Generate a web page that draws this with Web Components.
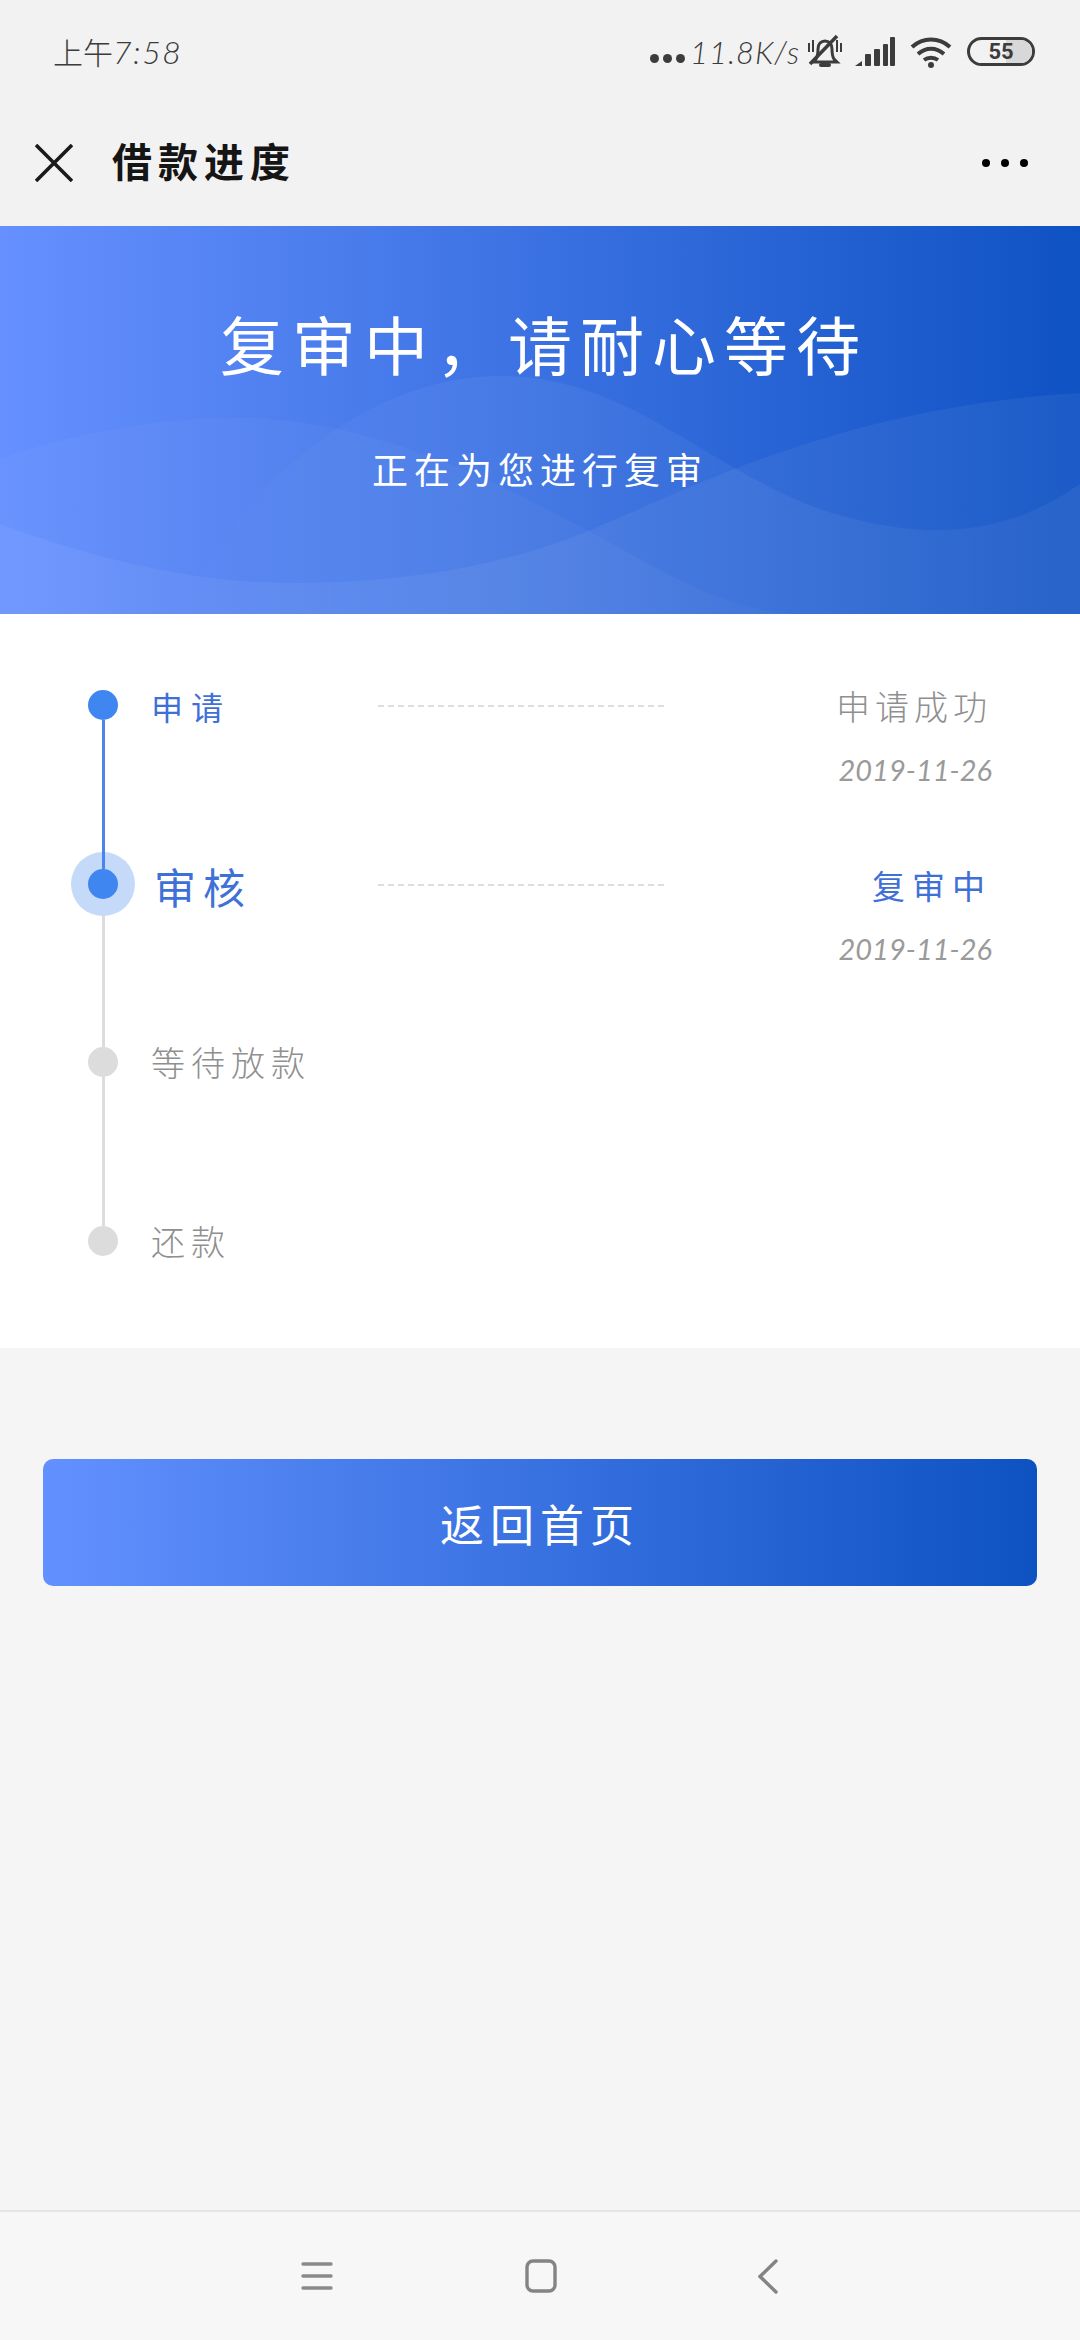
<!DOCTYPE html>
<html lang="zh-CN">
<head>
<meta charset="utf-8">
<title>借款进度</title>
<style>
  html, body { margin: 0; padding: 0; background: #f5f5f5; }
  body { width: 1080px; height: 2340px; font-family: "Noto Sans CJK SC", "Noto Sans", sans-serif; }
  #app { display: flex; flex-direction: column; height: 2340px; }
</style>
</head>
<body>
<div id="app">
  <status-bar></status-bar>
  <nav-bar title="借款进度"></nav-bar>
  <hero-banner heading="复审中，请耐心等待" sub="正在为您进行复审"></hero-banner>
  <progress-list>
    <progress-step state="done" label="申请" status="申请成功" date="2019-11-26"></progress-step>
    <progress-step state="active" label="审核" status="复审中" date="2019-11-26"></progress-step>
    <progress-step state="todo" label="等待放款"></progress-step>
    <progress-step state="todo" label="还款" last></progress-step>
  </progress-list>
  <primary-button>返回首页</primary-button>
  <system-nav></system-nav>
</div>

<script>
class StatusBar extends HTMLElement{
  constructor(){
    super()
    const shadow = this.attachShadow({ mode: "open" });
    shadow.innerHTML = `
      <style>
        :host { display: flex; align-items: center; justify-content: space-between; height: 100px; padding: 0 45px 0 53px; background: #f2f2f2; color: #3c3c3c; box-sizing: border-box; flex: none; }
        .time { font: 300 30px "Noto Sans CJK SC", sans-serif; display: flex; align-items: baseline; margin-top: 2px; }
        .time i { font: italic 300 32px Lato, "Liberation Sans", sans-serif; letter-spacing: 1.5px; }
        .right { display: flex; align-items: center; height: 40px; margin-top: 3px; }
        .dots { display: flex; gap: 4px; margin-top: 14px; margin-right: 5px; }
        .dots b { width: 9px; height: 9px; border-radius: 50%; background: #3c3c3c; }
        .speed { font: italic 300 31px Lato, "Liberation Sans", sans-serif; letter-spacing: 1px; width: 110px; white-space: nowrap; }
        svg { display: block; }
        .bell { margin-left: 7px; }
        .signal { margin-left: 12px; }
        .wifi { margin-left: 15px; }
        .battery { margin-left: 15px; width: 68px; height: 29px; border: 3px solid #3c3c3c; border-radius: 15px; box-sizing: border-box; display: flex; align-items: center; justify-content: center; position: relative; font: 700 22px Roboto, sans-serif; color: #3c3c3c; overflow: hidden; }
        .battery::after { content: ""; position: absolute; right: 0; top: 0; bottom: 0; width: 26px; background: #d8d8d8; z-index: 0; }
        .battery span { position: relative; z-index: 1; }
      </style>
      <div class="time">上午<i>7:58</i></div>
      <div class="right">
        <div class="dots"><b></b><b></b><b></b></div>
        <div class="speed">11.8K/s</div>
        <svg class="bell" width="36" height="34" viewBox="0 0 36 34" fill="none" stroke="#3c3c3c" stroke-width="3">
          <path d="M9 24c2-3 2-6 2-10 0-5 3-8 7-8s7 3 7 8c0 4 0 7 2 10l3 3H6z"/>
          <path d="M14 30h8" stroke-width="4" stroke-linecap="round"/>
          <path d="M2 8v9M6 5v12M30 5v12M34 8v9" stroke-width="2"/>
          <path d="M3 29 30 1" stroke-width="3.5"/>
        </svg>
        <svg class="signal" width="40" height="30" viewBox="0 0 40 30" fill="#3c3c3c">
          <path d="M0 29l7-5v5z"/><rect x="10" y="17" width="6" height="12" rx="1"/><rect x="19" y="12" width="6" height="17" rx="1"/><rect x="28" y="7" width="5" height="22" rx="1"/><rect x="35" y="0" width="5" height="29" rx="1"/>
        </svg>
        <svg class="wifi" width="42" height="32" viewBox="0 0 42 32" fill="none" stroke="#3c3c3c" stroke-width="4">
          <path d="M2 11C13 1 29 1 40 11"/>
          <path d="M8 18c8-7 18-7 26 0"/>
          <path d="M14 24c4-3 10-3 14 0"/>
          <circle cx="21" cy="29" r="3" fill="#3c3c3c" stroke="none"/>
        </svg>
        <div class="battery"><span>55</span></div>
      </div>
    `
  }
}
customElements.define('status-bar', StatusBar)

class NavBar extends HTMLElement{
  constructor(){
    super()
    const shadow = this.attachShadow({ mode: "open" });
    shadow.innerHTML = `
      <style>
        :host { display: flex; align-items: center; height: 126px; padding: 0 52px 0 35px; background: #f2f2f2; box-sizing: border-box; flex: none; }
        svg { display: block; }
        h1 { margin: -6px 0 0 39px; font: 700 40px "Noto Sans CJK SC", sans-serif; letter-spacing: 6px; color: #151515; flex: 1; }
        .more { display: flex; gap: 11px; }
        .more b { width: 8px; height: 8px; border-radius: 50%; background: #000; }
      </style>
      <svg width="38" height="38" viewBox="0 0 38 38" stroke="#1a1a1a" stroke-width="3.6" fill="none"><path d="M1 1l36 36M37 1L1 37"/></svg>
      <h1></h1>
      <div class="more"><b></b><b></b><b></b></div>
    `
    shadow.querySelector('h1').textContent = this.getAttribute('title')
  }
}
customElements.define('nav-bar', NavBar)

class HeroBanner extends HTMLElement{
  constructor(){
    super()
    const shadow = this.attachShadow({ mode: "open" });
    shadow.innerHTML = `
      <style>
        :host { display: flex; flex-direction: column; align-items: center; height: 388px; position: relative; overflow: hidden; background: linear-gradient(90deg, #6690ff 0%, #0f52c4 100%); color: #fff; box-sizing: border-box; padding-top: 68px; flex: none; }
        svg { position: absolute; inset: 0; }
        h2, p { position: relative; margin: 0; white-space: nowrap; font-family: "Noto Sans CJK SC", sans-serif; }
        h2 { font-size: 64px; font-weight: 400; letter-spacing: 8px; line-height: 96px; margin-left: 8px; }
        p { font-size: 36px; font-weight: 400; letter-spacing: 6px; line-height: 54px; margin-top: 51px; }
      </style>
      <svg width="1080" height="388" viewBox="0 0 1080 388">
        <defs>
          <linearGradient id="fadeLeft" x1="180" x2="460" y1="0" y2="0" gradientUnits="userSpaceOnUse">
            <stop offset="0" stop-color="#fff" stop-opacity="0"/>
            <stop offset="1" stop-color="#fff" stop-opacity=".05"/>
          </linearGradient>
        </defs>
        <path fill="#fff" fill-opacity=".03" d="M0 233C80 205 170 190 250 192 340 194 450 230 560 290 640 330 720 388 800 388H0z"/>
        <path fill="url(#fadeLeft)" d="M180 388C250 240 380 150 500 150 640 150 720 260 850 292 950 318 1020 300 1080 258V388z"/>
        <path fill="#fff" fill-opacity=".055" d="M0 298C100 335 200 357 290 357 420 357 520 335 600 300 700 258 850 180 1080 167V388H0z"/>
      </svg>
      <h2></h2>
      <p></p>
    `
    shadow.querySelector('h2').textContent = this.getAttribute('heading')
    shadow.querySelector('p').textContent = this.getAttribute('sub')
  }
}
customElements.define('hero-banner', HeroBanner)

class ProgressList extends HTMLElement{
  constructor(){
    super()
    const shadow = this.attachShadow({ mode: "open" });
    shadow.innerHTML = `
      <style>
        :host { display: flex; flex-direction: column; height: 734px; padding: 76px 88px 0 88px; background: #fff; box-sizing: border-box; flex: none; }
      </style>
      <slot></slot>
    `
  }
}
customElements.define('progress-list', ProgressList)

class ProgressStep extends HTMLElement{
  constructor(){
    super()
    const shadow = this.attachShadow({ mode: "open" });
    shadow.innerHTML = `
      <style>
        :host { display: grid; grid-template-columns: 30px 260px 286px 1fr; height: 178.7px; flex: none; color: #999; font-family: "Noto Sans CJK SC", sans-serif; }
        :host([last]) { height: 30px; }
        .rail { display: flex; flex-direction: column; align-items: center; }
        .dot { width: 30px; height: 30px; border-radius: 50%; background: #dcdcdc; flex: none; position: relative; z-index: 1; }
        .line { width: 3px; flex: 1; background: #dcdcdc; }
        :host([state=done]) .dot, :host([state=active]) .dot { background: #3f86f0; }
        :host([state=active]) .dot { box-shadow: 0 0 0 17px #c5d9f8; }
        :host([state=done]) .line { background: #4a84ee; position: relative; z-index: 2; }
        :host([last]) .line { display: none; }
        .label { margin: 0 0 0 33px; height: 30px; line-height: 30px; font-size: 34px; letter-spacing: 6px; white-space: nowrap; font-weight: 300; color: #8f8f8f; }
        :host([state=done]) .label, :host([state=active]) .label { color: #3f70d8; font-weight: 400; }
        :host([state=done]) .label { font-size: 32px; letter-spacing: 8px; margin-top: 1px; }
        :host([state=active]) .label { font-size: 42px; letter-spacing: 7px; margin-left: 36px; margin-top: 2px; }
        .dash { margin-top: 15px; height: 0; border-top: 2px dashed #dedede; }
        .meta { text-align: right; }
        .status { font-size: 34px; font-weight: 300; letter-spacing: 5px; line-height: 30px; white-space: nowrap; margin-top: 1px; color: #8f8f8f; }
        :host([state=active]) .status { color: #3f70d8; font-weight: 400; font-size: 33px; letter-spacing: 7px; }
        .date { font: italic 400 29px Lato, "Liberation Sans", sans-serif; color: #9a9a9a; margin-top: 31px; line-height: 36px; }
      </style>
      <div class="rail"><div class="dot"></div><div class="line"></div></div>
      <div class="label"></div>
      ${this.hasAttribute('status') ? '<div class="dash"></div><div class="meta"><div class="status"></div><div class="date"></div></div>' : ''}
    `
    shadow.querySelector('.label').textContent = this.getAttribute('label')
    if (this.hasAttribute('status')) {
      shadow.querySelector('.status').textContent = this.getAttribute('status')
      shadow.querySelector('.date').textContent = this.getAttribute('date')
    }
  }
}
customElements.define('progress-step', ProgressStep)

class PrimaryButton extends HTMLElement{
  constructor(){
    super()
    const shadow = this.attachShadow({ mode: "open" });
    shadow.innerHTML = `
      <style>
        :host { display: block; margin: 111px 43px 0; flex: 1; }
        button { display: block; width: 100%; height: 127px; border: none; border-radius: 10px; background: linear-gradient(90deg, #6390ff 0%, #0e52c2 100%); color: #fff; font: 400 44px "Noto Sans CJK SC", sans-serif; letter-spacing: 6px; padding: 0; }
      </style>
      <button><slot></slot></button>
    `
  }
}
customElements.define('primary-button', PrimaryButton)

class SystemNav extends HTMLElement{
  constructor(){
    super()
    const shadow = this.attachShadow({ mode: "open" });
    shadow.innerHTML = `
      <style>
        :host { display: flex; align-items: center; height: 130px; background: #f7f7f7; border-top: 2px solid #e6e6e6; box-sizing: border-box; padding-left: 301px; gap: 192px; flex: none; }
        svg { display: block; }
        .back { margin-left: 9px; }
      </style>
      <svg width="32" height="28" viewBox="0 0 32 28" stroke="#8a8a8a" stroke-width="3.4" stroke-linecap="round"><path d="M2 2h28M2 14h28M2 26h28"/></svg>
      <svg width="32" height="34" viewBox="0 0 32 34" fill="none" stroke="#848484" stroke-width="3.4"><rect x="2" y="2" width="28" height="30" rx="6"/></svg>
      <svg class="back" width="20" height="35" viewBox="0 0 20 35" fill="none" stroke="#848484" stroke-width="3.4" stroke-linecap="round"><path d="M18 2L2 17.5 18 33"/></svg>
    `
  }
}
customElements.define('system-nav', SystemNav)
</script>
</body>
</html>
